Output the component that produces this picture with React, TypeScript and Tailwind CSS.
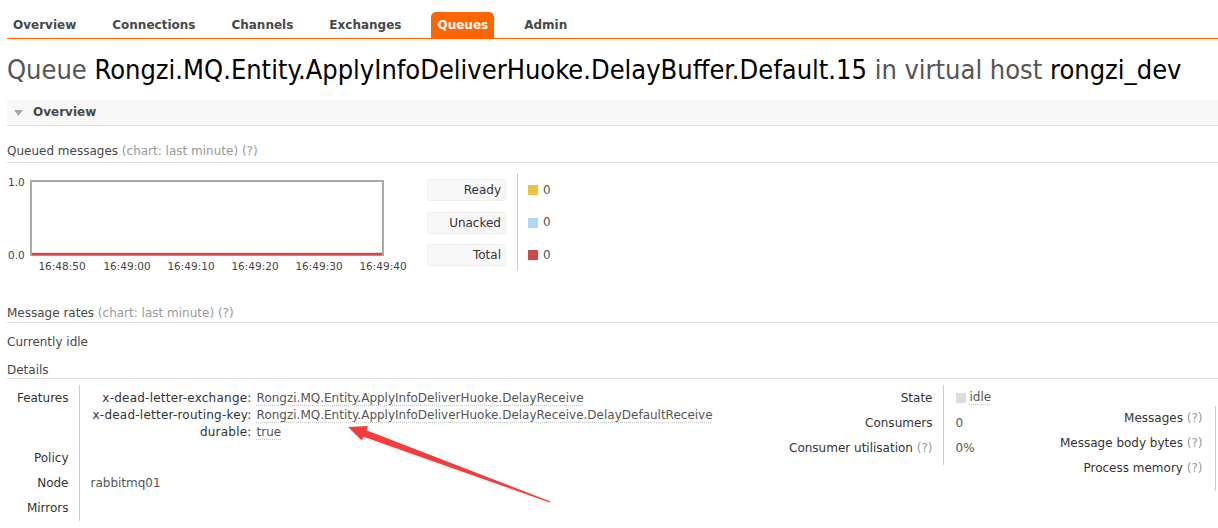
const tabs = ["Overview", "Connections", "Channels", "Exchanges", "Queues", "Admin"];

const times = [
  { x: 55, t: "16:48:50" },
  { x: 120, t: "16:49:00" },
  { x: 184, t: "16:49:10" },
  { x: 248, t: "16:49:20" },
  { x: 312, t: "16:49:30" },
  { x: 376, t: "16:49:40" },
];

const legend = [
  { label: "Ready", color: "bg-[#edc240]" },
  { label: "Unacked", color: "bg-[#afd8f8]" },
  { label: "Total", color: "bg-[#cb4b4b]" },
];

function Help() {
  return <span className="text-[#999]">(?)</span>;
}

function SectionTitle({ children, className = "" }: { children: React.ReactNode; className?: string }) {
  return <h3 className={`border-b border-[#ddd] ${className}`}>{children}</h3>;
}

function Val({ children }: { children: React.ReactNode }) {
  return (
    <span className="text-[#555] underline decoration-dotted decoration-[#c8c8c8] underline-offset-[3px]">
      {children}
    </span>
  );
}

function QueuedChart() {
  return (
    <svg width="400" height="100" viewBox="0 0 400 100" className="shrink-0" fontFamily="DejaVu Sans, sans-serif">
      <text x="1" y="13" fontSize="10.5" fill="#444">1.0</text>
      <text x="1" y="86" fontSize="10.5" fill="#444">0.0</text>
      <rect x="24" y="8" width="352" height="74" fill="#fff" stroke="#aaa" strokeWidth="2" />
      <line x1="25" y1="81" x2="375" y2="81" stroke="#cb4b4b" strokeWidth="2.5" />
      {times.map((t) => (
        <text key={t.t} x={t.x} y="97" fontSize="10.5" fill="#444" textAnchor="middle">
          {t.t}
        </text>
      ))}
    </svg>
  );
}

export default function App() {
  return (
    <div className="relative w-[1218px] h-[528px] overflow-hidden bg-white pl-[7px] font-['DejaVu_Sans',sans-serif] text-[12px] leading-[17px] text-[#484848]">
      <nav className="flex items-end gap-[24px] pt-[12px] border-b border-[#f60]">
        {tabs.map((t) => (
          <span
            key={t}
            className={`px-[6px] h-[26px] leading-[26px] rounded-t-[5px] font-bold ${
              t === "Queues" ? "bg-[#f60] text-white" : "text-[#484848]"
            }`}
          >
            {t}
          </span>
        ))}
      </nav>

      <h1 className="mt-[15px] font-['DejaVu_Sans_Condensed','DejaVu_Sans',sans-serif] text-[27px] leading-[32px] text-[#555] whitespace-nowrap">
        Queue <span className="text-black">Rongzi.MQ.Entity.ApplyInfoDeliverHuoke.DelayBuffer.Default.15</span> in virtual
        host <span className="text-black">rongzi_dev</span>
      </h1>

      <div className="mt-[14px] h-[26px] bg-[#f8f8f8] border-b border-[#ddd] flex items-center pl-[7px] gap-[10px]">
        <svg width="9" height="6" viewBox="0 0 9 6">
          <path d="M0 0 H9 L4.5 6 Z" fill="#aaa" />
        </svg>
        <span className="font-bold text-[#484848]">Overview</span>
      </div>

      <SectionTitle className="mt-[17px] pb-[2px]">
        Queued messages <span className="text-[#999]">(chart: last minute)</span> <Help />
      </SectionTitle>

      <div className="mt-[10px] flex">
        <QueuedChart />
        <div className="ml-[20px] w-[79px] pt-[6px] flex flex-col gap-[10.5px]">
          {legend.map((l) => (
            <div key={l.label} className="h-[22px] bg-[#f8f8f8] rounded-[2px] border border-[#f0f0f0] text-right pr-[4px] leading-[20px] text-[#333]">
              {l.label}
            </div>
          ))}
        </div>
        <div className="ml-[11px] h-[98px] border-l border-[#ccc] pl-[10px] pt-[6px] flex flex-col gap-[10.5px]">
          {legend.map((l) => (
            <div key={l.label} className="h-[22px] flex items-center gap-[5px]">
              <span className={`w-[10px] h-[10px] ${l.color}`} />
              <span className="text-[#555]">0</span>
            </div>
          ))}
        </div>
      </div>

      <SectionTitle className="mt-[32px]">
        Message rates <span className="text-[#999]">(chart: last minute)</span> <Help />
      </SectionTitle>

      <p className="mt-[11px]">Currently idle</p>

      <SectionTitle className="mt-[11px] leading-[16px]">Details</SectionTitle>

      <div className="mt-[6px] flex items-start">
        <table className="w-[776px] shrink-0 border-collapse">
          <tbody>
            <tr>
              <th className="w-[72px] text-right align-top font-normal text-[#333] pr-[10px] pt-[5px] pb-[5px] border-r border-[#ccc]">
                Features
              </th>
              <td className="pl-[13px] pt-[5px] pb-[5px] align-top">
                <div className="grid grid-cols-[auto_1fr] gap-x-[5px]">
                  <span className="text-right text-[#333] tracking-[0.23px]">x-dead-letter-exchange:</span>
                  <span><Val>Rongzi.MQ.Entity.ApplyInfoDeliverHuoke.DelayReceive</Val></span>
                  <span className="text-right text-[#333] tracking-[0.23px]">x-dead-letter-routing-key:</span>
                  <span><Val>Rongzi.MQ.Entity.ApplyInfoDeliverHuoke.DelayReceive.DelayDefaultReceive</Val></span>
                  <span className="text-right text-[#333] tracking-[0.23px]">durable:</span>
                  <span><Val>true</Val></span>
                </div>
              </td>
            </tr>
            {[
              ["Policy", ""],
              ["Node", "rabbitmq01"],
              ["Mirrors", ""],
            ].map(([k, v]) => (
              <tr key={k}>
                <th className="text-right font-normal text-[#333] pr-[10px] py-[4px] border-r border-[#ccc]">{k}</th>
                <td className="pl-[11px] py-[4px] text-[#555]">{v || "\u00a0"}</td>
              </tr>
            ))}
          </tbody>
        </table>

        <table className="shrink-0 border-collapse">
          <tbody>
            <tr>
              <th className="w-[160px] text-right font-normal text-[#333] pr-[10px] pt-[4px] pb-[3px] border-r border-[#ccc]">State</th>
              <td className="w-[100px] pl-[12px] pt-[4px] pb-[3px]">
                <span className="inline-flex items-center gap-[4px]">
                  <span className="w-[10px] h-[10px] bg-[#ddd]" />
                  <Val>idle</Val>
                </span>
              </td>
            </tr>
            <tr>
              <th className="text-right font-normal text-[#333] pr-[10px] py-[4px] border-r border-[#ccc]">Consumers</th>
              <td className="pl-[12px] py-[4px] text-[#555]">0</td>
            </tr>
            <tr>
              <th className="text-right font-normal text-[#333] pr-[10px] pt-[4px] pb-[8px] border-r border-[#ccc]">
                Consumer utilisation <Help />
              </th>
              <td className="pl-[12px] pt-[4px] pb-[8px] text-[#555]">0%</td>
            </tr>
          </tbody>
        </table>

        <table className="mt-[21px] shrink-0 border-collapse">
          <tbody>
            {["Messages", "Message body bytes", "Process memory"].map((k, i) => (
              <tr key={k}>
                <th
                  className={`w-[172px] text-right font-normal text-[#333] pr-[12px] border-r border-[#ccc] ${
                    i === 2 ? "pt-[4px] pb-[14px]" : "py-[4px]"
                  }`}
                >
                  {k} <Help />
                </th>
                <td className="pl-[12px] w-[60px]">&nbsp;</td>
              </tr>
            ))}
          </tbody>
        </table>
      </div>

      <svg className="absolute inset-0 pointer-events-none" width="1218" height="528" viewBox="0 0 1218 528">
        <polygon
          points="348,427 368,426 366.4,430.2 550.3,501.4 549.7,502.6 363.6,436.8 361.8,440.6"
          fill="#f43c3c"
        />
      </svg>
    </div>
  );
}
